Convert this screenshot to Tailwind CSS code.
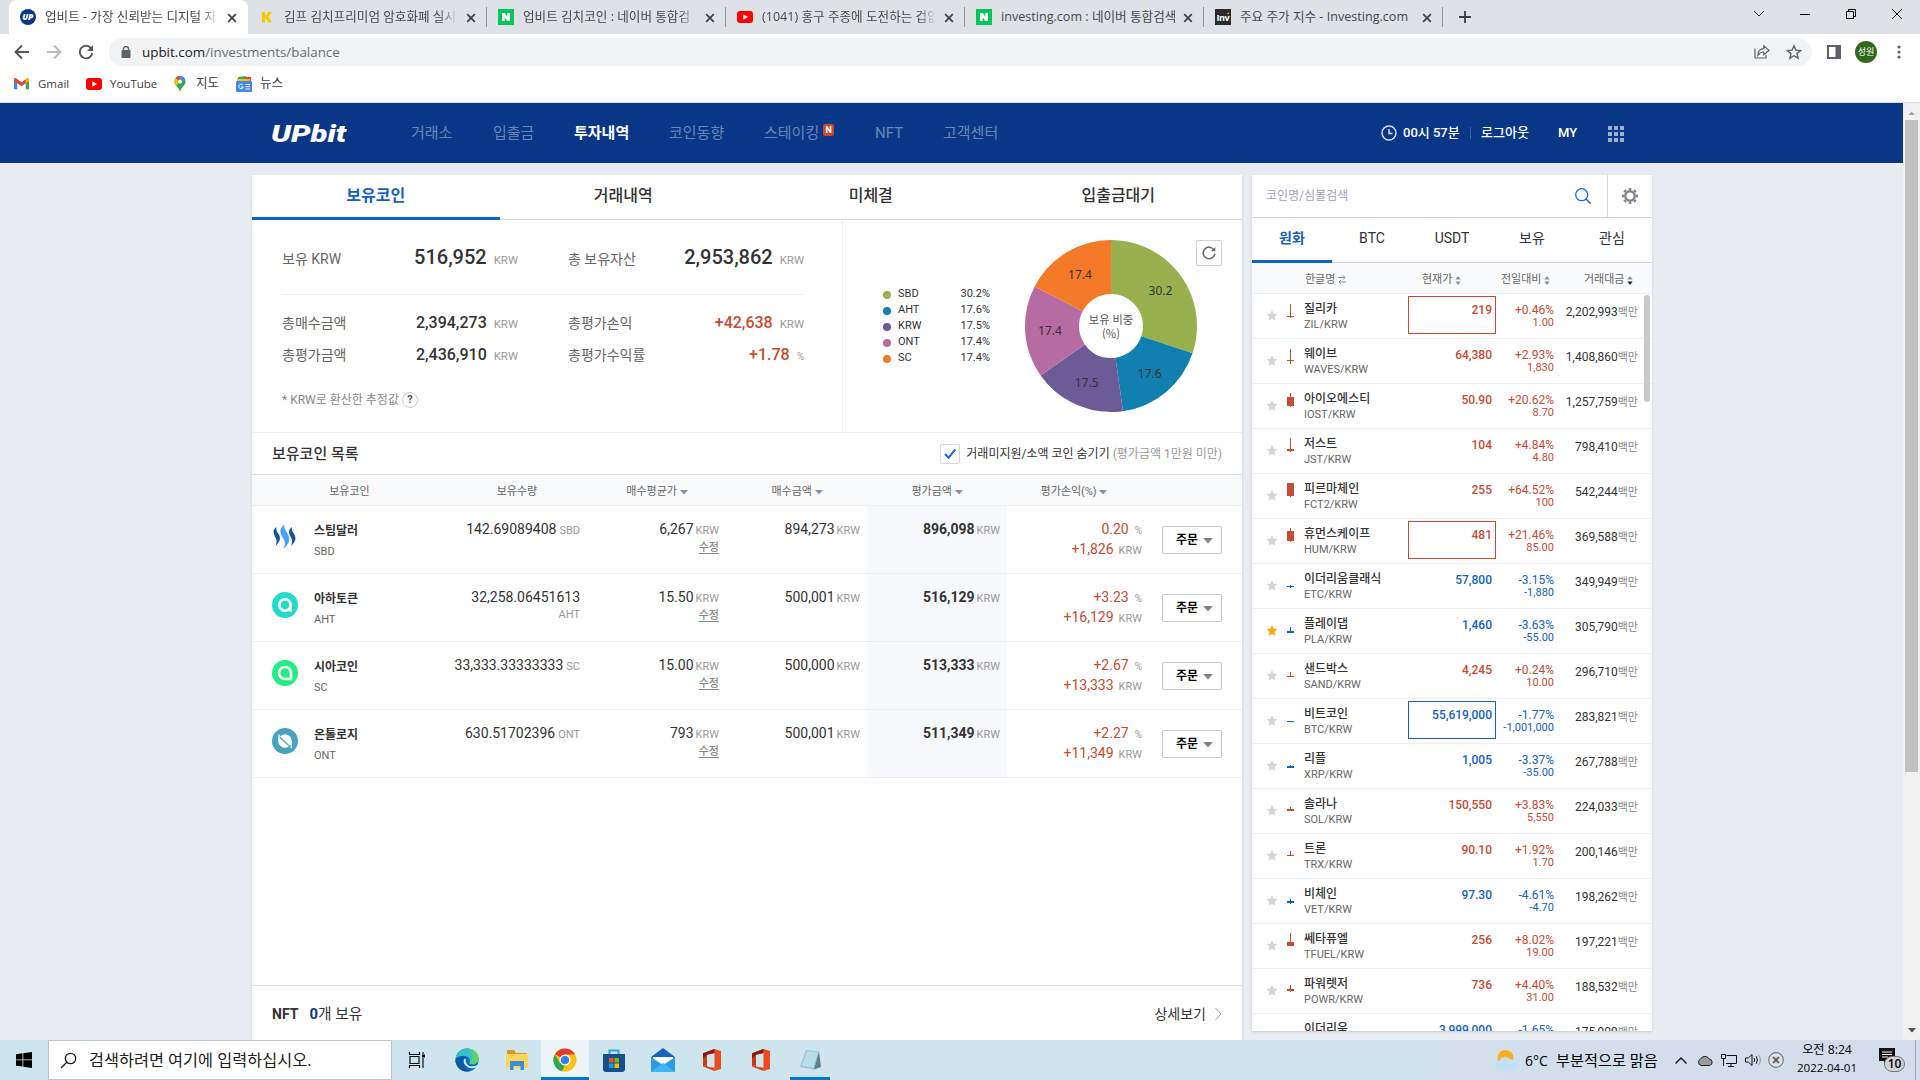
<!DOCTYPE html>
<html lang="ko">
<head>
<meta charset="utf-8">
<title>업비트 - 투자내역</title>
<script src="https://cdn.jsdelivr.net/npm/@tailwindcss/browser@4"></script>
</head>
<body class="h-[1080px] w-[1920px] overflow-hidden bg-[#e9ecf1] font-['Roboto','Noto_Sans_CJK_KR',sans-serif] text-[#333]">
<svg class="hidden">
  <symbol id="close" viewBox="0 0 10 10"><path d="M1.2 1.2l7.6 7.6M8.8 1.2L1.2 8.8" stroke="#3c4043" stroke-width="1.7" fill="none"/></symbol>
  <symbol id="yt" viewBox="0 0 16 16"><rect y="2" width="16" height="12" rx="3" fill="#f00"/><path d="M6.3 5.3L11 8l-4.7 2.7z" fill="#fff"/></symbol>
  <symbol id="naver" viewBox="0 0 16 16"><rect width="16" height="16" fill="#03c75a"/><path d="M4 4h2.9l2.4 3.7V4H12v8H9.200L6.700 8.300V12H4z" fill="#fff"/></symbol>
  <symbol id="office" viewBox="0 0 24 24"><path d="M14.500 1L3 5.200v13.200l4-1.600V6.800l7.500-1.900z" fill="#c8381c"/><path d="M14.500 1L21 3v18l-6.500 2z" fill="#ea4b20"/><path d="M3 18.400L14.500 23l.2-3.200L7.500 18.700l-.5-2z" fill="#e23f1c"/><path d="M14.500 1L3 5.200v5l4-3.400 7.500-1.900z" fill="#8c1a10"/></symbol>
  <symbol id="star" viewBox="0 0 24 24"><path d="M12 1l3.300 7.300 7.700.9-5.800 5.300 1.600 8L12 18.600 5.200 22.500l1.600-8L1 9.200l7.700-.9z"/></symbol>
  <symbol id="tri" viewBox="0 0 8 5"><path d="M0 0h8L4 4.500z"/></symbol>
  <symbol id="sort" viewBox="0 0 6 10"><path d="M0 4h6L3 0z" fill="#8a8fa8"/><path d="M0 6h6L3 10z" fill="currentColor"/></symbol>
</svg>

<div class="flex h-full flex-col">
  <!-- tab strip -->
  <div class="flex h-[34px] shrink-0 bg-[#dee1e6] font-['Open_Sans','Noto_Sans_CJK_KR',sans-serif] text-[12.600px] text-[#45494d]">
    <div id="tabs" class="flex pl-[9px]"></div>
    <div class="flex w-11 items-center justify-center pl-0">
      <svg class="h-3 w-3" viewBox="0 0 12 12"><path d="M6 0v12M0 6h12" stroke="#3c4043" stroke-width="1.800"/></svg>
    </div>
    <div class="ml-auto flex h-7 items-center">
      <svg class="mr-[36px] h-[10px] w-[10px]" viewBox="0 0 10 10"><path d="M0 2l5 5 5-5" stroke="#222" fill="none"/></svg>
      <svg class="mr-[36px] h-[10px] w-[10px]" viewBox="0 0 10 10"><path d="M0 5.500h10" stroke="#000"/></svg>
      <svg class="mr-[36px] h-[10px] w-[10px]" viewBox="0 0 10 10"><path d="M.5 2.500h7v7h-7zM2.500 2.500v-2h7v7h-2" stroke="#000" fill="none"/></svg>
      <svg class="mr-[18px] h-[10px] w-[10px]" viewBox="0 0 10 10"><path d="M0 0l10 10M10 0L0 10" stroke="#000" fill="none"/></svg>
    </div>
  </div>

  <!-- address bar -->
  <div class="flex h-9 shrink-0 items-center bg-white font-['Open_Sans','Noto_Sans_CJK_KR',sans-serif]">
    <svg class="ml-[14px] h-4 w-4" viewBox="0 0 16 16"><path d="M15 8H2M8 1.500L1.500 8 8 14.500" stroke="#54585d" stroke-width="1.900" fill="none"/></svg>
    <svg class="ml-4 h-4 w-4" viewBox="0 0 16 16"><path d="M1 8h13M8 1.500L14.500 8 8 14.500" stroke="#b9bbbe" stroke-width="1.900" fill="none"/></svg>
    <svg class="ml-4 h-4 w-4" viewBox="0 0 16 16"><path d="M13.300 4.500A6.300 6.300 0 1 0 14.300 9" stroke="#54585d" stroke-width="1.900" fill="none"/><path d="M15 1v6H9z" fill="#54585d"/></svg>
    <div class="ml-[15px] flex h-7 w-[1703px] items-center rounded-full bg-[#f1f3f4] pl-[12px] pr-[10px] text-[13.400px]">
      <svg class="h-3 w-[10px]" viewBox="0 0 10 12"><rect x="0.500" y="4" width="9" height="8" rx="1" fill="#5f6368"/><path d="M2.500 5V3a2.500 2.500 0 0 1 5 0v2" stroke="#5f6368" stroke-width="1.400" fill="none"/></svg>
      <span class="ml-[11px] text-[#202124]">upbit.com<span class="text-[#6a6e73]">/investments/balance</span></span>
      <svg class="ml-auto h-4 w-4" viewBox="0 0 16 16"><path d="M1 4.500V14h11v-3" stroke="#5f6368" stroke-width="1.200" fill="none"/><path d="M3.800 11.300C4 7 6.300 4.700 9.800 4.600V1.800L15 6.400l-5.200 4.300V8C7.200 8 5.400 9 3.800 11.300z" stroke="#5f6368" stroke-width="1.200" fill="none"/></svg>
      <svg class="ml-4 h-4 w-4" viewBox="0 0 16 16"><path d="M8 1.800l1.900 4.300 4.700.4-3.600 3.100 1.100 4.600L8 11.700l-4.100 2.500L5 9.600 1.400 6.500l4.700-.4z" stroke="#5f6368" stroke-width="1.400" fill="none"/></svg>
    </div>
    <svg class="ml-[15px] h-[14px] w-[14px]" viewBox="0 0 14 14"><path d="M0 0h14v14H0zM2 2v10h6.500V2z" fill="#5f6368" fill-rule="evenodd"/></svg>
    <div class="ml-[14px] flex h-[22px] w-[22px] items-center justify-center rounded-full bg-[#33691e] text-[9px] text-white">성원</div>
    <svg class="ml-[20px] h-[14px] w-1" viewBox="0 0 4 14"><circle cx="2" cy="2" r="1.600" fill="#5f6368"/><circle cx="2" cy="7" r="1.600" fill="#5f6368"/><circle cx="2" cy="12" r="1.600" fill="#5f6368"/></svg>
  </div>

  <!-- bookmarks -->
  <div class="flex h-[33px] shrink-0 items-center border-b border-[#dadce0] bg-white pb-[5px] pl-[14px] font-['Open_Sans','Noto_Sans_CJK_KR',sans-serif] text-[11.500px] text-[#3c4043]">
    <svg class="h-[14px] w-[15px]" viewBox="0 0 16 13"><path d="M0 1.500V12h3.500V5.500z" fill="#4285f4"/><path d="M16 1.500V12h-3.500V5.500z" fill="#34a853"/><path d="M0 1.500C0 .3 1.500-.3 2.500.5L8 4.700 13.500.5C14.500-.3 16 .3 16 1.500v1.800L8 9 0 3.300z" fill="#ea4335"/><path d="M12.500 1.200l1-.7C14.500-.3 16 .3 16 1.500v1.800L12.500 6z" fill="#fbbc04"/></svg>
    <span class="ml-[9px] w-[48px]">Gmail</span>
    <svg class="h-4 w-4"><use href="#yt"/></svg>
    <span class="ml-2 w-[63px] whitespace-nowrap">YouTube</span>
    <svg class="h-4 w-[14px]" viewBox="0 0 14 16"><path d="M7 0a5.500 5.500 0 0 1 5.500 5.500c0 4-4.300 5.500-5.500 10.500C5.800 11 1.500 9.500 1.500 5.500A5.500 5.500 0 0 1 7 0z" fill="#34a853"/><path d="M2.700 2L7 5.500 3 10C2 8.700 1.500 7 1.500 5.500c0-1.500.5-2.600 1.200-3.500z" fill="#fbbc04"/><path d="M7 0a5.500 5.500 0 0 1 4.800 2.800L7 8z" fill="#4285f4"/><path d="M7 0L7 5.500 2.700 2A5.500 5.500 0 0 1 7 0z" fill="#ea4335"/><circle cx="7" cy="5.500" r="1.900" fill="#fff"/></svg>
    <span class="ml-[9px] w-[40px] text-[12.600px]">지도</span>
    <svg class="h-4 w-4" viewBox="0 0 16 16"><path d="M2 1l8-1 2 4H2z" fill="#34a853"/><path d="M9 1h6v5H9z" fill="#ea4335"/><path d="M1 3h13v3H1z" fill="#fbbc04"/><rect y="5" width="16" height="11" rx="1" fill="#4285f4"/><path d="M7 9.200A2.300 2.300 0 1 0 7.300 11H5.200M9.500 8.500h4.500M9.500 10.700h4.500M9.500 13h4.500" stroke="#fff" fill="none"/></svg>
    <span class="ml-2 text-[12.600px]">뉴스</span>
  </div>

  <!-- page viewport -->
  <div class="flex h-[937px] shrink-0">
    <div class="flex w-[1903px] flex-col">
      <header class="flex h-[60px] shrink-0 items-center bg-[#093687] pl-[271px] text-[15px] text-[#6b86b7]">
        <svg class="h-[22px] w-[76px]" viewBox="0 0 76 22"><g fill="#fff" font-family="Roboto" font-weight="900" font-style="italic"><text x="0" y="19.500" font-size="24.500" textLength="75" lengthAdjust="spacingAndGlyphs">UPbit</text></g></svg>
        <nav class="flex items-center leading-[22px]">
          <span class="ml-[64px] w-[82px]">거래소</span>
          <span class="w-[81px]">입출금</span>
          <span class="w-[95px] font-bold text-white">투자내역</span>
          <span class="w-[95px]">코인동향</span>
          <span class="flex w-[111px]">스테이킹<b class="ml-[4px] mt-[2px] flex h-3 w-[11px] items-center justify-center rounded-[2px] bg-[#c84a31] text-[9px] text-white">N</b></span>
          <span class="w-[68px]">NFT</span>
          <span>고객센터</span>
        </nav>
        <div class="ml-auto mr-[279px] flex items-center text-[13px] font-medium text-white">
          <svg class="mr-[6px] h-4 w-4" viewBox="0 0 16 16"><circle cx="8" cy="8" r="7" stroke="#dfe5f0" stroke-width="1.400" fill="none"/><path d="M8 4v4.500h3.500" stroke="#dfe5f0" stroke-width="1.400" fill="none"/></svg>
          <span class="w-[67px] whitespace-nowrap">00시 57분</span>
          <i class="mr-[10px] h-3 w-px bg-[#3a5e9f]"></i>
          <span class="w-[77px]">로그아웃</span><span class="w-[50px]">MY</span>
          <svg class="mt-[2px] h-4 w-4" viewBox="0 0 16 16"><path d="M0 2h16M0 8h16M0 14h16" stroke="#9dafcf" stroke-width="4" stroke-dasharray="4 2"/></svg>
        </div>
      </header>

      <div class="flex gap-[10px] pl-[252px] pt-3">
        <!-- investments -->
        <section class="flex h-[865px] w-[990px] shrink-0 flex-col bg-white shadow-sm">
          <div class="grid h-[45px] shrink-0 grid-cols-4 border-b border-[#d4d6dc] text-center text-[16px] leading-[42px]">
            <div class="h-[45px] border-b-[3px] border-[#1261c4] font-bold text-[#1261c4]">보유코인</div>
            <div class="font-medium">거래내역</div><div class="font-medium">미체결</div><div class="font-medium">입출금대기</div>
          </div>
          <div class="flex h-[213px] shrink-0 border-b border-[#eceef2]">
            <div class="w-[591px] border-r border-[#eceef2] pl-[30px] pr-[38px] pt-[21px] text-[14px] leading-8 text-[#666]">
              <div class="grid h-[54px] grid-cols-[236px_50px_236px] items-start border-b border-[#eee]">
                <div class="flex items-baseline"><span>보유 KRW</span><span class="ml-auto text-[20px] font-medium text-[#333]">516,952</span><span class="ml-[7px] text-[11.400px] text-[#999]">KRW</span></div><i></i>
                <div class="flex items-baseline"><span>총 보유자산</span><span class="ml-auto text-[20px] font-medium text-[#333]">2,953,862</span><span class="ml-[7px] text-[11.400px] text-[#999]">KRW</span></div>
              </div>
              <div class="mt-[12px] grid grid-cols-[236px_50px_236px] leading-[32px]">
                <div class="flex h-8 items-baseline"><span>총매수금액</span><span class="ml-auto text-[16px] font-medium text-[#333]">2,394,273</span><span class="ml-[7px] text-[11.400px] text-[#999]">KRW</span></div><i></i>
                <div class="flex h-8 items-baseline"><span>총평가손익</span><span class="ml-auto text-[16px] font-medium text-[#c84a31]">+42,638</span><span class="ml-[7px] text-[11.400px] text-[#999]">KRW</span></div>
                <div class="flex h-8 items-baseline"><span>총평가금액</span><span class="ml-auto text-[16px] font-medium text-[#333]">2,436,910</span><span class="ml-[7px] text-[11.400px] text-[#999]">KRW</span></div><i></i>
                <div class="flex h-8 items-baseline"><span>총평가수익률</span><span class="ml-auto text-[16px] font-medium text-[#c84a31]">+1.78</span><span class="ml-[7px] text-[10px] text-[#999]">%</span></div>
              </div>
              <div class="mt-[13px] flex items-center text-[12px] text-[#888]">* KRW로 환산한 추정값<span class="ml-[3px] flex h-4 w-4 items-center justify-center rounded-full border border-[#ccc] text-[11px] font-bold text-[#555]">?</span></div>
            </div>
            <div class="flex flex-1 pl-[40px] pt-5">
              <div class="w-[107px] pt-[46px]" id="legend"></div>
              <svg class="ml-[35px] h-[172px] w-[172px]" viewBox="0 0 172 172" font-family="Noto Sans" font-size="12" text-anchor="middle" fill="#333">
                <g id="donut" transform="rotate(-90 86 86)" fill="none" stroke-width="54"></g>
                <text x="135.500" y="55">30.2</text><text x="124.700" y="138">17.6</text><text x="61.700" y="147">17.5</text><text x="25" y="95">17.4</text><text x="55" y="39">17.4</text>
                <g font-family="Noto Sans CJK KR" font-size="11.200" fill="#555"><text x="86" y="84">보유 비중</text><text x="86" y="97.500">(%)</text></g>
              </svg>
              <div class="-ml-[1px] flex h-[26px] w-[26px] items-center justify-center rounded-[2px] border border-[#d0d2d8]">
                <svg class="h-[14px] w-[14px]" viewBox="0 0 14 14"><path d="M12.200 4.300A5.800 5.800 0 1 0 12.800 7.500" stroke="#666" stroke-width="1.500" fill="none"/><path d="M13.300 1v4.200H9z" fill="#666"/></svg>
              </div>
            </div>
          </div>
          <div class="flex h-[42px] shrink-0 items-center border-b border-[#d9dbe1] pl-5 pr-[20px] pt-px">
            <h2 class="text-[15px] font-medium leading-[22px]">보유코인 목록</h2>
            <span class="ml-auto flex h-5 w-5 items-center justify-center rounded-[2px] border border-[#d5d7dd]"><svg class="h-3 w-3" viewBox="0 0 12 12"><path d="M1 6l3.500 3.800L11.300 1.500" stroke="#1667f0" stroke-width="2" fill="none"/></svg></span>
            <span class="ml-[6px] text-[12px]">거래미지원/소액 코인 숨기기 <span class="text-[#999]">(평가금액 1만원 미만)</span></span>
          </div>
          <div class="grid h-[31px] shrink-0 grid-cols-[195px_140px_140px_140px_140px_134px_101px] border-b border-[#eceef2] bg-[#f9fafc] text-center text-[11px] leading-[33px] text-[#666]">
            <div>보유코인</div><div>보유수량</div>
            <div>매수평균가 <svg class="inline h-[5px] w-[8px] fill-[#8a8fa8]"><use href="#tri"/></svg></div>
            <div>매수금액 <svg class="inline h-[5px] w-[8px] fill-[#8a8fa8]"><use href="#tri"/></svg></div>
            <div>평가금액 <svg class="inline h-[5px] w-[8px] fill-[#8a8fa8]"><use href="#tri"/></svg></div>
            <div>평가손익(%) <svg class="inline h-[5px] w-[8px] fill-[#8a8fa8]"><use href="#tri"/></svg></div>
          </div>
          <div id="holdings"></div>
          <div class="mt-auto flex h-[55px] shrink-0 items-center border-t border-[#dcdee3] pl-5 pr-[20px] pt-[2px] text-[14px]">
            <b class="font-bold">NFT</b><span class="ml-[11px] text-[14.800px]"><b class="text-[#093687]">0</b>개 보유</span>
            <span class="ml-auto">상세보기</span>
            <svg class="ml-[9px] h-3 w-[7px]" viewBox="0 0 7 12"><path d="M.5 0L6 6 .5 12" stroke="#999" fill="none"/></svg>
          </div>
        </section>

        <!-- market list -->
        <section class="relative flex h-[856px] w-[400px] shrink-0 flex-col overflow-hidden bg-white shadow-sm">
          <div class="flex h-[43px] shrink-0 items-center border-b border-[#d4d6dc] pl-[14px]">
            <span class="text-[12px] text-[#a0a3b5]">코인명/심볼검색</span>
            <svg class="ml-auto mr-4 h-4 w-4" viewBox="0 0 16 16"><circle cx="6.700" cy="6.700" r="6" stroke="#1667f0" stroke-width="1.300" fill="none"/><path d="M11 11l4.600 4.600" stroke="#1667f0" stroke-width="1.500"/></svg>
            <div class="flex h-[42px] w-[45px] items-center justify-center border-l border-[#d4d6dc]">
              <svg class="h-4 w-4" viewBox="0 0 16 16"><circle cx="8" cy="8" r="4.700" stroke="#80838f" stroke-width="2.500" fill="none"/><circle cx="8" cy="8" r="7" stroke="#80838f" stroke-width="2" fill="none" pathLength="16" stroke-dasharray="1 1" stroke-dashoffset=".5"/></svg>
            </div>
          </div>
          <div class="grid h-[45px] shrink-0 grid-cols-5 border-b border-[#d4d6dc] text-center text-[14px] leading-[40px]">
            <div class="h-[45px] border-b-[3px] border-[#1261c4] font-bold text-[#1261c4]">원화</div><div>BTC</div><div>USDT</div><div>보유</div><div>관심</div>
          </div>
          <div class="grid h-[31px] shrink-0 grid-cols-[104px_106px_52px_74px_64px] border-b border-[#eceef2] bg-[#f9fafc] pt-px text-[11px] leading-[32px] text-[#666]">
            <div class="flex items-center justify-end"></div>
            <div class="-ml-[51px] flex items-center gap-[3px]">한글명 <svg class="h-[10px] w-[8px]" viewBox="0 0 8 10"><path d="M0 2.500h7M4.700.3L7 2.500 4.700 4.700M8 7H1M3.300 4.800L1 7l2.300 2.300" stroke="#8a8fa8" fill="none"/></svg></div>
            <div class="-ml-[40px] flex items-center gap-[3px] text-[#8a8fa8]"><span class="text-[#666]">현재가</span> <svg class="h-[9px] w-[6px]"><use href="#sort"/></svg></div>
            <div class="-ml-[13px] flex items-center gap-[3px] text-[#8a8fa8]"><span class="text-[#666]">전일대비</span> <svg class="h-[9px] w-[6px]"><use href="#sort"/></svg></div>
            <div class="-ml-[4px] flex items-center gap-[3px] text-[#222]"><span class="text-[#666]">거래대금</span> <svg class="h-[9px] w-[6px]"><use href="#sort"/></svg></div>
          </div>
          <div id="market"></div>
          <div class="absolute right-[2px] top-[120px] h-[107px] w-[6px] rounded-full bg-[#c8c8ca]"></div>
        </section>
      </div>
    </div>
    <!-- window scrollbar -->
    <div class="flex w-[17px] flex-col items-center bg-[#f1f1f1] py-[7px]">
      <svg class="mt-[1px] h-[4px] w-[7px] rotate-180 fill-[#a3a3a3]"><use href="#tri"/></svg>
      <div class="mt-[5px] h-[652px] w-[13px] bg-[#c1c1c1]"></div>
      <svg class="mt-auto h-[5px] w-[8px] fill-[#505050]"><use href="#tri"/></svg>
    </div>
  </div>

  <!-- taskbar -->
  <div class="flex h-10 shrink-0 items-center bg-linear-to-r from-[#cde5ed] via-[#cfe5ed] to-[#d3dcea] font-['Open_Sans','Noto_Sans_CJK_KR',sans-serif] text-black">
    <div class="flex w-12 justify-center"><svg class="h-4 w-4" viewBox="0 0 16 16"><path d="M0 2.200l6.500-.9v6.200H0zM7.300 1.200L16 0v7.500H7.300zM0 8.300h6.500v6.300L0 13.700zM7.300 8.300H16V16l-8.700-1.200z"/></svg></div>
    <div class="flex h-10 w-[344px] items-center border border-[#bfc5c8] bg-white pl-[11px] text-[16.300px] text-[#222]">
      <svg class="h-[17px] w-[17px]" viewBox="0 0 17 17"><circle cx="10.500" cy="6.500" r="5.200" stroke="#222" stroke-width="1.300" fill="none"/><path d="M6.800 10.200L1 16" stroke="#222" stroke-width="1.300"/></svg>
      <span class="ml-[12px]">검색하려면 여기에 입력하십시오.</span>
    </div>
    <div class="flex w-[49px] justify-center"><svg class="h-4 w-[18px]" viewBox="0 0 18 16"><path d="M2 4.500h9v7H2zM1.500 0v2.500h10V0M1.500 16v-2.500h10V16M15 0v2M15 6v10" stroke="#111" stroke-width="1.200" fill="none"/><path d="M14 2.500h3v3h-3z"/></svg></div>
    <div class="flex w-[51px] justify-center"><svg class="h-6 w-6" viewBox="0 0 24 24"><circle cx="12" cy="12" r="11.500" fill="#0f6cbd"/><path d="M.7 10.500C1.500 4.500 6.200.5 12 .5c6.500 0 11.500 4.800 11.500 10 0 3.700-2.700 5.800-5.800 5.800-2.500 0-3.700-.9-3.200-2 .9-2 .3-5.800-4.500-6.300C5.500 7.500 2 9 .7 10.500z" fill="#35c1c8"/><path d="M13 .5C19 1 23.500 5.500 23.500 10.500c0 3.700-2.700 5.800-5.800 5.800-2 0-3-.6-3.200-1.200C19 13 19 5 13 .5z" fill="#5ad36a"/><path d="M9.500 10.500c-3 3.500-.5 10.500 5.500 12.600-8 1.800-14.700-4.100-14.500-11 2-3.500 6.500-4.600 10.500-3.100z" fill="#0c59a4"/><path d="M10 11c-1.500 4 2.500 8.800 8 8.300 2-.2 3-.7 4-1.300" stroke="#cfe5ed" stroke-width="2" fill="none"/></svg></div>
    <div class="flex w-[49px] justify-center"><svg class="h-5 w-[22px]" viewBox="0 0 22 20"><path d="M1 0h7l2 3h11v4H1z" fill="#d99a1c"/><path d="M0 4h22v14H0z" fill="#ffd45c"/><path d="M4 11h14v9h-3.500v-4h-7v4H4z" fill="#3a8fd8"/></svg></div>
    <div class="flex h-10 w-[48px] items-center justify-center border-b-[3px] border-[#0078d7] bg-white/60"><svg class="mt-[3px] h-6 w-6" viewBox="0 0 24 24"><circle cx="12" cy="12" r="11.500" fill="#fbc116"/><path d="M12 12L2 6.200A11.500 11.500 0 0 1 22 6.500H12z" fill="#e33b2e"/><path d="M2 6.200l5 9 5 2-3.300 6A11.500 11.500 0 0 1 2 6.200z" fill="#2da94f"/><circle cx="12" cy="12" r="5.500" fill="#fff"/><circle cx="12" cy="12" r="4.300" fill="#3b7ded"/></svg></div>
    <div class="flex w-[49px] justify-center"><svg class="h-6 w-[22px]" viewBox="0 0 22 24"><path d="M6.500 7V2.500h9V7" stroke="#2ba4e0" stroke-width="2" fill="none"/><path d="M0 6h22v15a3 3 0 0 1-3 3H3a3 3 0 0 1-3-3z" fill="#164f8e"/><path d="M6 10h4.500v4.500H6z" fill="#f25022"/><path d="M11.500 10H16v4.500h-4.500z" fill="#7fba00"/><path d="M6 15.500h4.500V20H6z" fill="#00a4ef"/><path d="M11.500 15.500H16V20h-4.500z" fill="#ffb900"/></svg></div>
    <div class="flex w-[50px] justify-center"><svg class="h-6 w-6" viewBox="0 0 24 24"><path d="M0 9L12 0l12 9v15H0z" fill="#1466b8"/><path d="M2 9h20v8H2z" fill="#fff"/><path d="M0 9l12 8 12-8v15H0z" fill="#2e9be6"/><path d="M0 24l12-9 12 9z" fill="#41b4f2"/></svg></div>
    <div class="flex w-[48px] justify-center"><svg class="h-6 w-6"><use href="#office"/></svg></div>
    <div class="flex w-[50px] justify-center"><svg class="h-6 w-6"><use href="#office"/></svg></div>
    <div class="ml-[4px] flex h-10 w-[40px] items-center justify-center border-b-[3px] border-[#0078d7]"><svg class="mt-[3px] h-[22px] w-6" viewBox="0 0 24 22"><path d="M8 1l13 1.500-5 18L2 18z" fill="#8fc3d4"/><path d="M21 2.500l2 15.500-7 2.500z" fill="#5c7f8c"/><path d="M9 2l11 1.200-4.500 15.500L3.500 17z" fill="#b9dde8"/></svg></div>
    <div class="ml-auto flex items-center">
      <svg class="mr-[8px] h-[20px] w-[22px]" viewBox="0 0 22 20"><circle cx="10.500" cy="8" r="8" fill="#fcb01f"/><path d="M5 19.500a4.500 4.500 0 0 1-.5-9A6 6 0 0 1 15 9.500a5 5 0 0 1 2.500 10z" fill="#bfe1fa"/></svg>
      <span class="w-[31px] whitespace-nowrap text-[14px]">6°C</span>
      <span class="w-[119px] whitespace-nowrap text-[15.200px]">부분적으로 맑음</span>
      <svg class="mr-[10px] h-[7px] w-3" viewBox="0 0 12 7"><path d="M.5 6.500L6 1l5.500 5.500" stroke="#111" stroke-width="1.300" fill="none"/></svg>
      <svg class="mr-2 h-[11px] w-4" viewBox="0 0 16 11"><path d="M4 10.500a3.500 3.500 0 0 1-.5-6.500A5 5 0 0 1 12.300 4a3.300 3.300 0 0 1 .2 6.500z" fill="#9b9b9b" stroke="#222"/></svg>
      <svg class="mr-2 h-[13px] w-4" viewBox="0 0 16 13"><path d="M5.500 1.500h10v8H5M7 12.500h6M10 9.500v3M.5.500h4v4h-4zM2.500 4.500V12" stroke="#111" fill="none"/></svg>
      <svg class="mr-[6px] h-[14px] w-[17px]" viewBox="0 0 17 14"><path d="M.5 5h2.800L7 1.500v11L3.300 9H.5z" stroke="#111" fill="none"/><path d="M9 5q1.300 2 0 4M11.200 3.200q2.500 3.800 0 7.600" stroke="#111" fill="none"/><path d="M13.500 1.500q3.800 5.500 0 11" stroke="#999" fill="none"/></svg>
      <svg class="mr-[10px] h-4 w-4" viewBox="0 0 16 16"><circle cx="8" cy="8" r="7.300" stroke="#777" stroke-width="1.200" fill="#e2e6ec"/><path d="M5 5l6 6M11 5l-6 6" stroke="#666" stroke-width="2"/></svg>
      <div class="w-[66px] whitespace-nowrap pb-[2px] text-center text-[11.500px] leading-[18px]"><span class="text-[12.200px]">오전 8:24</span><br>2022-04-01</div>
      <div class="relative ml-[19px] mr-[20px] h-[24px] w-[16px]"><svg class="h-[17px] w-4" viewBox="0 0 16 17"><path d="M0 0h16v13H9l-4 4v-4H0z" fill="#111"/><path d="M3 4h10M3 6.500h10M3 9h6" stroke="#fff"/></svg>
        <span class="absolute left-[5px] top-[8px] flex h-4 w-[21px] items-center justify-center rounded-full border border-[#777] bg-[#d0d3d8] text-[12px] font-semibold">10</span></div>
      <i class="mr-1 h-10 w-px bg-[#9ba5b0]"></i>
    </div>
  </div>
</div>

<script>
const upIcon = '<svg class="h-4 w-4 shrink-0" viewBox="0 0 16 16"><circle cx="8" cy="8" r="8" fill="#093687"/><text x="7.800" y="11" font-size="8.500" font-weight="800" font-style="italic" text-anchor="middle" fill="#fff">UP</text></svg>';
const kIcon = '<svg class="h-4 w-4 shrink-0" viewBox="0 0 16 16"><path d="M3 3h3v4l3.500-4H13L9.300 8l3.900 5.500H9.800L6 8.800v4.700H3z" fill="#fcc800"/></svg>';
const invIcon = '<svg class="h-4 w-4 shrink-0" viewBox="0 0 16 16"><path fill="#2b2b2b" d="M0 0h16v16H0z"/><text x="8" y="12" font-size="9" font-weight="700" text-anchor="middle" textLength="13" fill="#fff">Inv</text><path d="M11.500 4.500l2.500-1v2z" fill="#f7a600"/></svg>';
const nv = '<svg class="h-4 w-4 shrink-0"><use href="#naver"/></svg>', yt = '<svg class="h-4 w-4 shrink-0"><use href="#yt"/></svg>';
const tabs = [[upIcon,'업비트 - 가장 신뢰받는 디지털 자'],[kIcon,'김프 김치프리미엄 암호화폐 실시'],[nv,'업비트 김치코인 : 네이버 통합검'],[yt,'(1041) 홍구 주종에 도전하는 겁없'],[nv,'investing.com : 네이버 통합검색'],[invIcon,'주요 주가 지수 - Investing.com']];
document.getElementById('tabs').innerHTML = tabs.map(([ic,t],i) => `
  <div class="flex h-[34px] w-[239px] items-center ${i ? '' : 'rounded-t-lg bg-white'} pl-[11px]">
    ${ic}<span class="ml-[9px] w-[174px] overflow-hidden whitespace-nowrap ${i < 4 ? 'mask-r-from-90% mask-r-to-100%' : ''}">${t}</span>
    <svg class="ml-[8px] mt-px h-[10px] w-[10px] shrink-0"><use href="#close"/></svg>
    <i class="ml-auto h-5 w-px shrink-0 ${i ? 'bg-[#909398]' : 'bg-transparent'}"></i>
  </div>`).join('');

const parts = [['SBD',30.2,'#98b14e'],['AHT',17.6,'#1180b0'],['KRW',17.5,'#6d5b98'],['ONT',17.4,'#b76ba3'],['SC',17.4,'#f47a29']];
let acc = 0;
document.getElementById('donut').innerHTML = parts.map(([n,v,c]) => {
  const s = `<circle cx="86" cy="86" r="59" stroke="${c}" pathLength="100.100" stroke-dasharray="${v} 100.100" stroke-dashoffset="${-acc}"/>`;
  acc += v; return s;
}).join('');
document.getElementById('legend').innerHTML = parts.map(([n,v,c]) => `
  <div class="flex h-4 items-center text-[11px]"><i class="mr-[7px] mt-px h-2 w-2 rounded-full" style="background:${c}"></i>${n}<span class="ml-auto">${v}%</span></div>`).join('');

const coins = [
 ['스팀달러','SBD','142.69089408','6,267','894,273','896,098','0.20','+1,826','<path d="M4.500 3C-2 8 4 13 4.500 16c.4 2.500-.5 4-1 6C10 16 8 12 6 9 4.500 7 4 5 4.500 3zM20 3c-6.500 5-.5 10 0 13 .4 2.500-.5 4-1 6 6.500-6 4.500-10 2.500-13-1.500-2-2-4-1.500-6z" fill="#1a5099"/><path d="M12.500 .500C4 7 11 12.500 12.500 17c.8 3 0 5.500-1 8C20 17.500 17.500 12.500 14.500 8 12.500 5 12 3 12.500 .500z" fill="#4ba2f2"/>'],
 ['아하토큰','AHT','32,258.06451613','15.50','500,001','516,129','+3.23','+16,129','<circle cx="13" cy="13" r="13" fill="#22dccb"/><circle cx="13" cy="13" r="5.700" stroke="#fff" stroke-width="2.600" fill="none"/><path d="M18.700 12v8" stroke="#fff" stroke-width="2.600"/>'],
 ['시아코인','SC','33,333.33333333','15.00','500,000','513,333','+2.67','+13,333','<circle cx="13" cy="13" r="13" fill="#20ee82"/><path d="M19 19h-6a6 6 0 1 1 6-6z" stroke="#fff" stroke-width="2.600" fill="none"/>'],
 ['온톨로지','ONT','630.51702396','793','500,001','511,349','+2.27','+11,349','<circle cx="13" cy="13" r="13" fill="#48a3bf"/><circle cx="13" cy="13" r="6.700" fill="#fff"/><path d="M6.500 8l13 12" stroke="#48a3bf" stroke-width="1.300"/><path d="M7 6.500v7M19.200 13v7" stroke="#fff" stroke-width="1.300"/>']];
document.getElementById('holdings').innerHTML = coins.map(c => `
  <div class="grid h-[68px] grid-cols-[195px_140px_140px_140px_140px_140px_95px] border-b border-[#eceef2] text-right text-[14px] leading-5">
    <div class="flex pl-5 text-left"><svg class="mt-[18px] h-[26px] w-[26px]" viewBox="0 0 26 26">${c[8]}</svg><div class="ml-4 pt-[15px]"><div class="text-[12px] font-bold">${c[0]}</div><div class="text-[11px] leading-[22px] text-[#666]">${c[1]}</div></div></div>
    <div class="pr-[7px] pt-[13px]">${c[2]}${c[1]==='AHT' ? `<div class="text-[11px] leading-4 text-[#999]">${c[1]}</div>` : `<span class="ml-[3px] text-[11px] text-[#999]">${c[1]}</span>`}</div>
    <div class="pr-2 pt-[13px]">${c[3]}<span class="ml-[2px] text-[11px] text-[#999]">KRW</span><div class="-mt-px text-[11px] font-medium leading-4 text-[#888] underline underline-offset-2">수정</div></div>
    <div class="pr-[7px] pt-[13px]">${c[4]}<span class="ml-[2px] text-[11px] text-[#999]">KRW</span></div>
    <div class="bg-[#f7f8fc] pr-[7px] pt-[13px]"><b>${c[5]}</b><span class="ml-[2px] text-[11px] text-[#999]">KRW</span></div>
    <div class="pr-[5px] pt-[13px] text-[#c84a31]"><div class="h-5">${c[6]}<span class="ml-[6px] text-[10px] text-[#999]">%</span></div><div class="h-5">${c[7]}<span class="ml-[5px] text-[11px] text-[#999]">KRW</span></div></div>
    <div class="pl-[15px] pt-5"><div class="flex h-7 w-[60px] items-center rounded-[2px] border border-[#c9cbd1] pl-[13px] text-[12px] font-bold text-black">주문<svg class="ml-[5px] mt-px h-[6px] w-[10px] fill-[#80838f]"><use href="#tri"/></svg></div></div>
  </div>`).join('');

// name, pair, price, change %, change, volume, wick [from,to], body [from,to], price highlighted, favourite
const rows = [
 ['질리카','ZIL','219','+0.46%','1.00','2,202,993',10,24,22,23,1],
 ['웨이브','WAVES','64,380','+2.93%','1,830','1,408,860',10,25,21,22],
 ['아이오에스티','IOST','50.90','+20.62%','8.70','1,257,759',9,23,13,22],
 ['저스트','JST','104','+4.84%','4.80','798,410',9,23,20,22],
 ['피르마체인','FCT2','255','+64.52%','100','542,244',9,23,9,22],
 ['휴먼스케이프','HUM','481','+21.46%','85.00','369,588',9,23,12,22,1],
 ['이더리움클래식','ETC','57,800','-3.15%','-1,880','349,949',21,24,22,23],
 ['플레이댑','PLA','1,460','-3.63%','-55.00','305,790',18,24,22,24,0,1],
 ['샌드박스','SAND','4,245','+0.24%','10.00','296,710',18,23,22,23],
 ['비트코인','BTC','55,619,000','-1.77%','-1,001,000','283,821',22,23,22,23,1],
 ['리플','XRP','1,005','-3.37%','-35.00','267,788',21,24,22,24],
 ['솔라나','SOL','150,550','+3.83%','5,550','224,033',18,22,20,22],
 ['트론','TRX','90.10','+1.92%','1.70','200,146',17,22,21,22],
 ['비체인','VET','97.30','-4.61%','-4.70','198,262',20,25,22,24],
 ['쎄타퓨엘','TFUEL','256','+8.02%','19.00','197,221',9,22,18,22],
 ['파워렛저','POWR','736','+4.40%','31.00','188,532',16,23,20,22],
 ['이더리움','ETH','3,999,000','-1.65%','-67,000','175,909',18,23,20,22]];
document.getElementById('market').innerHTML = rows.map(r => {
  const up = r[3][0] === '+', tc = up ? 'text-[#c84a31]' : 'text-[#1261c4]', k = up ? '#c84a31' : '#1261c4';
  return `<div class="grid h-[45px] grid-cols-[35px_17px_104px_88px_58px_84px] border-b border-[#eceef2] text-right text-[12px]">
    <div class="pl-[14px] pt-[15px]"><svg class="h-[13px] w-3 ${r[11] ? 'fill-[#ffa800]' : 'fill-[#d3d4d6]'}"><use href="#star"/></svg></div>
    <svg class="h-[30px] w-[7px]" viewBox="0 0 7 30" shape-rendering="crispEdges"><rect x="3" y="${r[6]}" width="1" height="${r[7]-r[6]}" fill="${k}"/><rect y="${r[8]}" width="7" height="${r[9]-r[8]}" fill="${k}"/></svg>
    <div class="whitespace-nowrap pt-[7px] text-left leading-4"><div class="font-medium">${r[0]}</div><div class="text-[11px] leading-[15px] text-[#666]">${r[1]}/KRW</div></div>
    <div class="mt-[2px] h-[38px] border pr-[3px] pt-[5px] font-medium leading-4 ${tc} ${r[10] ? (up ? 'border-[#c84a31]' : 'border-[#1261c4]') : 'border-transparent'}">${r[2]}</div>
    <div class="flex flex-col items-end pt-[8px] leading-4 ${tc}">${r[3]}<div class="-mt-px text-[11px] leading-3">${r[4]}</div></div>
    <div class="pt-[10px] leading-4">${r[5]}<span class="text-[11px] text-[#888]">백만</span></div>
  </div>`;
}).join('');
</script>
</body>
</html>
